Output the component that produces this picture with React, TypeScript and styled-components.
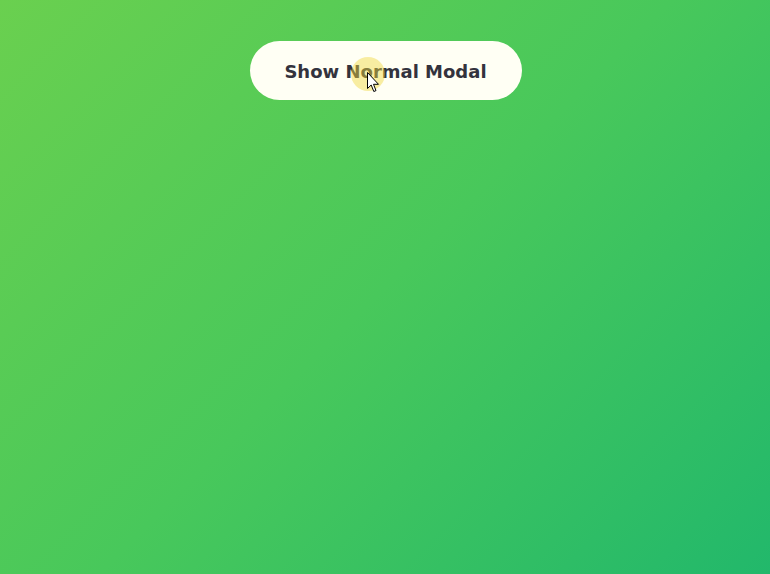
import React from "react";
import styled, { createGlobalStyle } from "styled-components";

const Global = createGlobalStyle`
  html, body { margin: 0; padding: 0; height: 100%; }
  body { font-family: "DejaVu Sans", Verdana, sans-serif; }
  #root { height: 100%; }
`;

const Page = styled.main`
  position: relative;
  min-height: 100vh;
  box-sizing: border-box;
  padding: 41px 0 0 1px;
  display: flex;
  justify-content: center;
  align-items: flex-start;
  background: linear-gradient(135deg, #6ad04f 0%, #48c85b 50%, #22b86b 100%);
`;

const ButtonWrap = styled.div`
  position: relative;
`;

const ShowButton = styled.button`
  width: 272px;
  height: 59px;
  border: none;
  border-radius: 30px;
  background: #fffff4;
  color: #33333d;
  font-family: "DejaVu Sans", Verdana, sans-serif;
  font-weight: bold;
  font-size: 18px;
  cursor: pointer;
  padding: 2px 0 0 0;
`;

const Highlight = styled.div`
  position: absolute;
  left: 101px;
  top: 16px;
  width: 34px;
  height: 34px;
  border-radius: 50%;
  background: rgba(240, 215, 60, 0.45);
  pointer-events: none;
`;

const Cursor = styled.svg`
  position: absolute;
  left: 117px;
  top: 31px;
  pointer-events: none;
`;

export default function App() {
  return (
    <>
      <Global />
      <Page>
        <ButtonWrap>
          <ShowButton>Show Normal Modal</ShowButton>
          <Highlight />
          <Cursor width="13" height="21" viewBox="0 0 13 21">
            <path
              d="M0.5 0.5 L0.5 16.5 L4.2 13 L6.8 19.5 L9 18.6 L6.5 12.3 L11.5 12.3 Z"
              fill="#ffffff"
              stroke="#000000"
              strokeWidth="1"
              strokeLinejoin="miter"
            />
          </Cursor>
        </ButtonWrap>
      </Page>
    </>
  );
}
